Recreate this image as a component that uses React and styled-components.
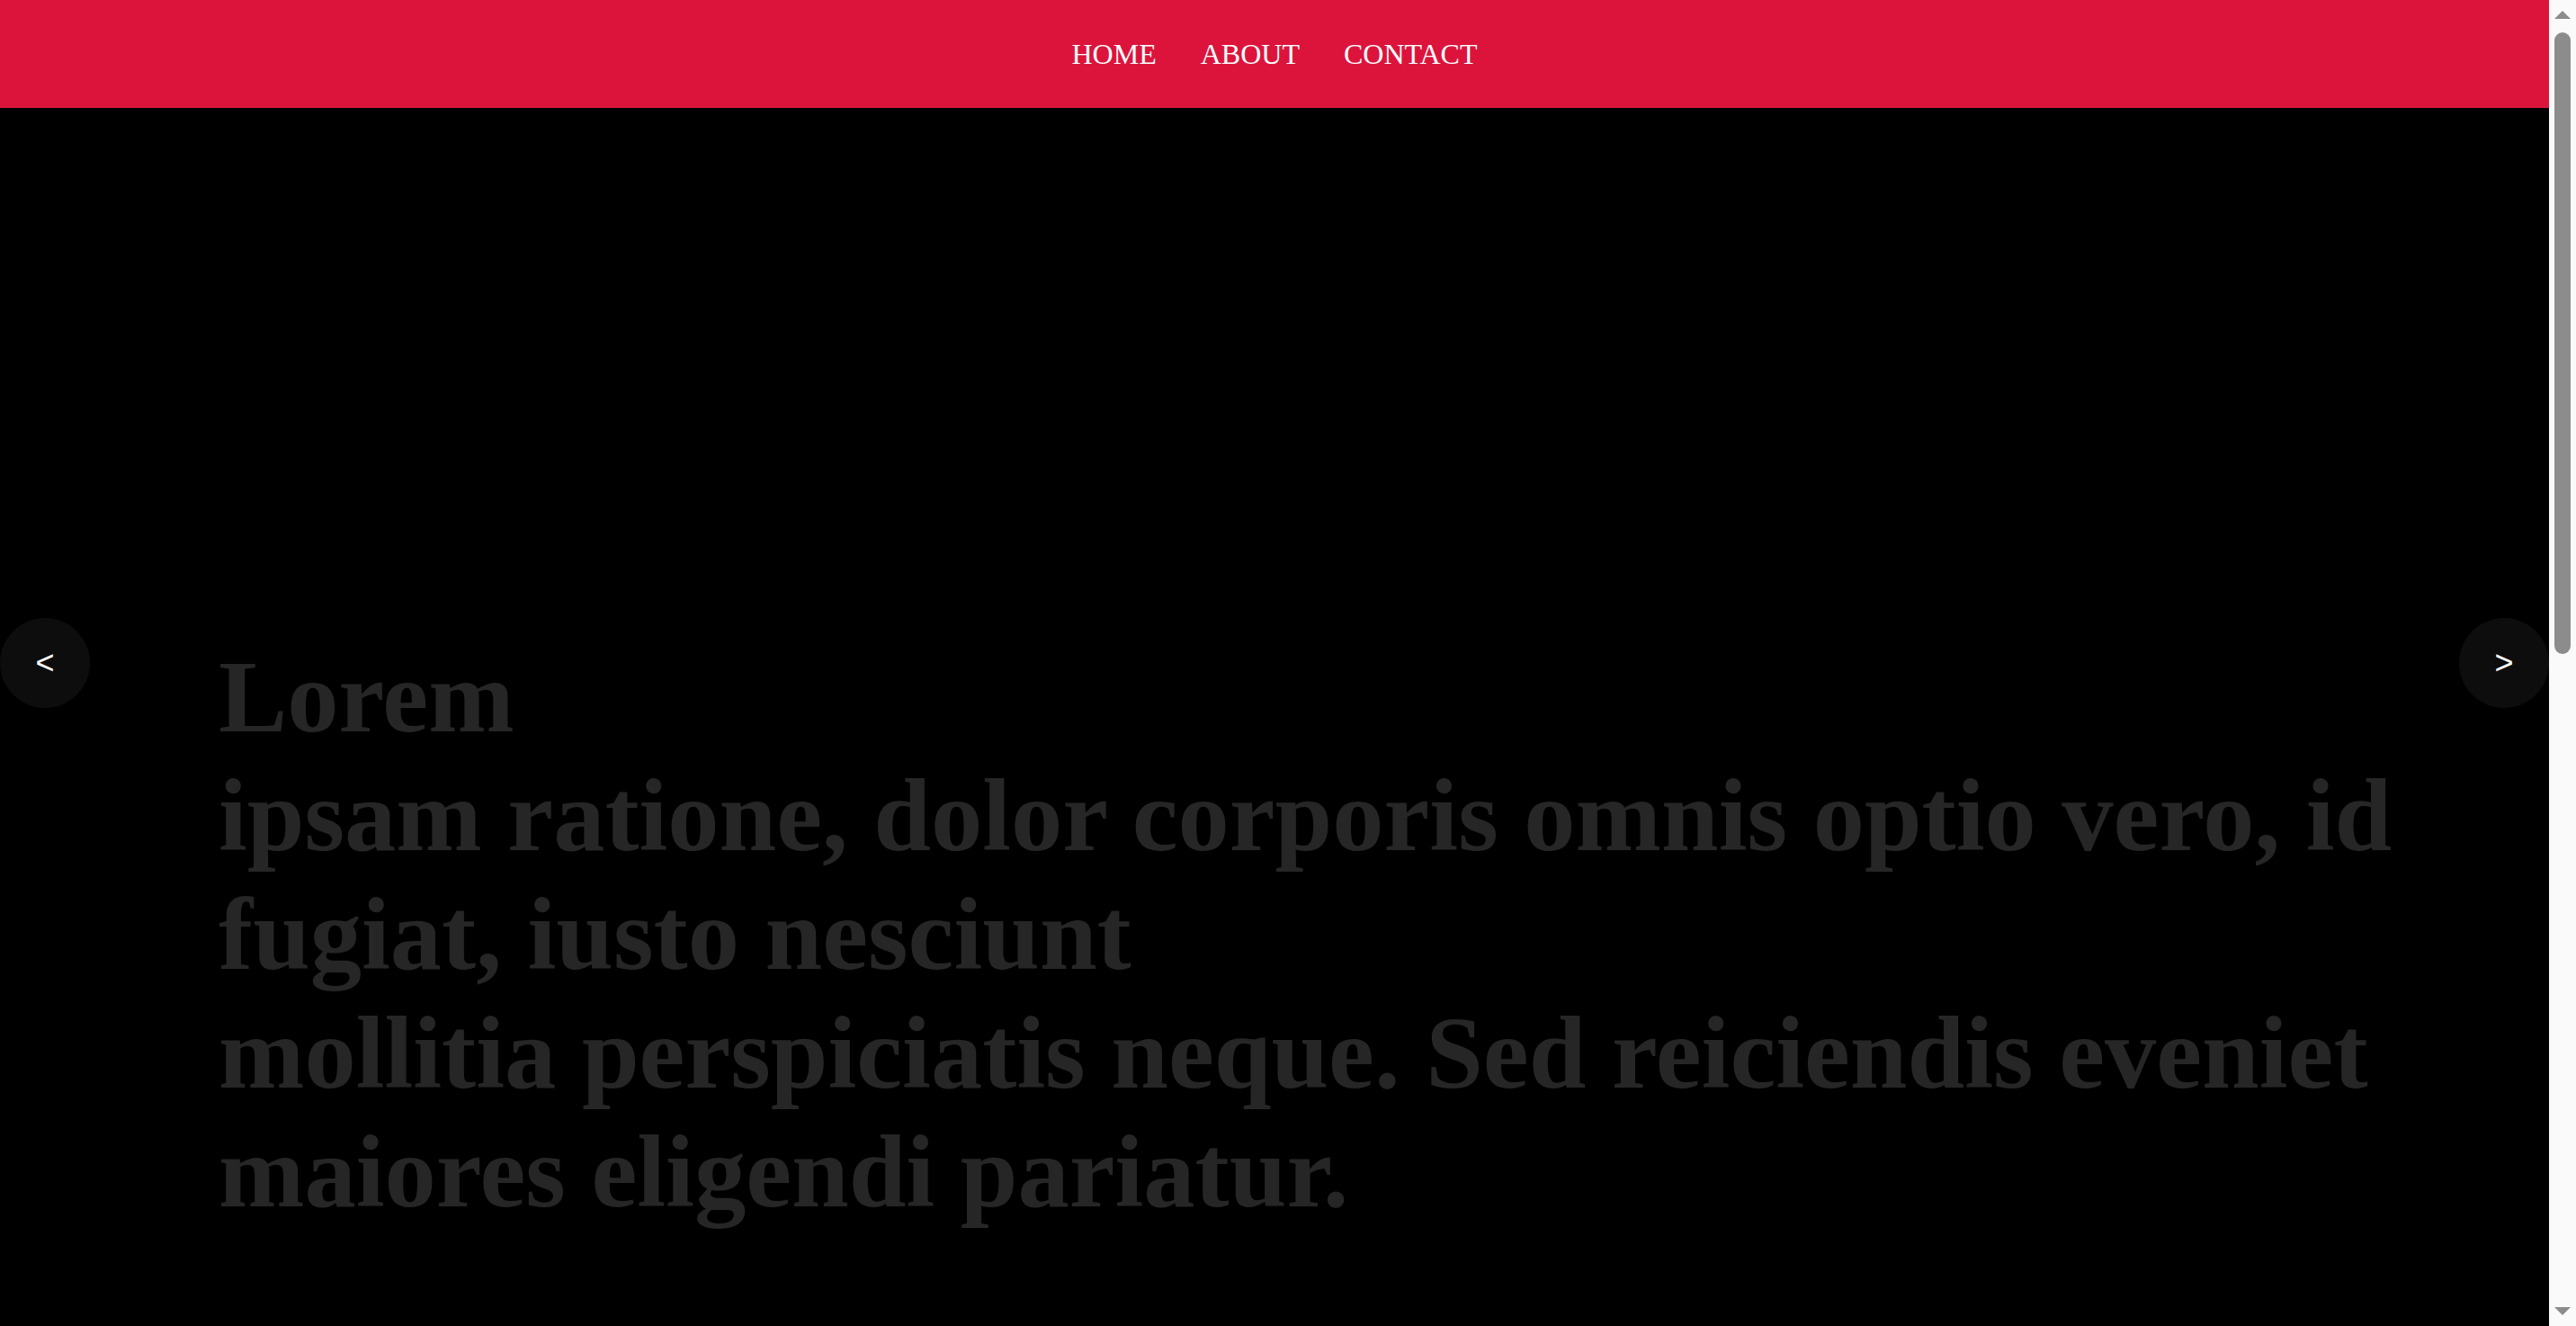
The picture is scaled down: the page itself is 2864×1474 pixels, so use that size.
import React, { useState } from "react";
import styled, { createGlobalStyle } from "styled-components";

const GlobalStyle = createGlobalStyle`
  * {
    box-sizing: border-box;
  }

  html,
  body {
    margin: 0;
    padding: 0;
    background: #000;
  }
`;

const Page = styled.div`
  margin-right: 30px;
`;

const NavBar = styled.nav`
  position: fixed;
  top: 0;
  left: 0;
  right: 30px;
  z-index: 10;
  height: 120px;
  display: flex;
  justify-content: center;
  align-items: center;
  gap: 49px;
  background: #dc143c;
`;

const NavLink = styled.a`
  color: #fff;
  font-family: "Liberation Serif", "Times New Roman", serif;
  font-size: 32px;
  text-decoration: none;
  text-transform: uppercase;
  cursor: pointer;
`;

const Hero = styled.section`
  position: relative;
  height: 100vh;
  display: flex;
  flex-direction: column;
  justify-content: flex-end;
  padding: 0 140px 105px 243px;
  background: #000;
  overflow: hidden;
`;

const Caption = styled.h1`
  margin: 0;
  font-family: "Liberation Serif", "Times New Roman", serif;
  font-size: 114.5px;
  font-weight: 700;
  line-height: normal;
  color: #262626;
`;

const CaptionLine = styled.span`
  display: block;
`;

const ArrowButton = styled.button`
  position: absolute;
  top: 50%;
  ${(p) => (p.$side === "left" ? "left: 0;" : "right: 0;")}
  transform: translateY(-50%);
  width: 100px;
  height: 100px;
  border: none;
  border-radius: 50%;
  background: rgba(255, 255, 255, 0.05);
  color: #fff;
  font-family: "Liberation Sans", Arial, sans-serif;
  font-size: 36px;
  line-height: 1;
  display: flex;
  align-items: center;
  justify-content: center;
  padding: 0;
  cursor: pointer;
`;

const NextSection = styled.section`
  min-height: 1542px;
  background: #000;
`;

// page scroll rail, drawn since the browser hides its own
const ScrollRail = styled.aside`
  position: fixed;
  top: 0;
  right: 0;
  bottom: 0;
  z-index: 20;
  width: 30px;
  display: flex;
  flex-direction: column;
  background: #fafafa;
`;

const RailButton = styled.div`
  height: 30px;
  flex: none;
  display: flex;
  justify-content: center;
  align-items: ${(p) => (p.$down ? "flex-start" : "flex-end")};
  padding: ${(p) => (p.$down ? "9px 0 0" : "0 0 9px")};
`;

const Triangle = styled.span`
  width: 0;
  height: 0;
  border-left: 9px solid transparent;
  border-right: 9px solid transparent;
  ${(p) =>
    p.$down
      ? "border-top: 9px solid #8c8c8c;"
      : "border-bottom: 9px solid #8c8c8c;"}
`;

const RailTrack = styled.div`
  flex: 1;
  padding: 6px;
`;

const RailThumb = styled.div`
  width: 18px;
  border-radius: 9px;
  background: #8c8c8c;
`;

const slides = [
  [
    "Lorem",
    "ipsam ratione, dolor corporis omnis optio vero, id fugiat, iusto nesciunt",
    "mollitia perspiciatis neque. Sed reiciendis eveniet maiores eligendi pariatur.",
  ],
];

function App() {
  const [current, setCurrent] = useState(0);

  const prev = () => setCurrent((c) => (c === 0 ? slides.length - 1 : c - 1));
  const next = () => setCurrent((c) => (c === slides.length - 1 ? 0 : c + 1));

  const thumbRatio = 1474 / 3016;

  return (
    <>
      <GlobalStyle />
      <Page>
        <NavBar>
          <NavLink href="#home">Home</NavLink>
          <NavLink href="#about">About</NavLink>
          <NavLink href="#contact">Contact</NavLink>
        </NavBar>
        <Hero id="home">
          <ArrowButton $side="left" onClick={prev}>
            &lt;
          </ArrowButton>
          <Caption>
            {slides[current].map((line, i) => (
              <CaptionLine key={i}>{line}</CaptionLine>
            ))}
          </Caption>
          <ArrowButton $side="right" onClick={next}>
            &gt;
          </ArrowButton>
        </Hero>
        <NextSection id="about" />
      </Page>
      <ScrollRail>
        <RailButton>
          <Triangle />
        </RailButton>
        <RailTrack>
          <RailThumb style={{ height: `${Math.round(thumbRatio * 1414)}px` }} />
        </RailTrack>
        <RailButton $down>
          <Triangle $down />
        </RailButton>
      </ScrollRail>
    </>
  );
}

export default App;
